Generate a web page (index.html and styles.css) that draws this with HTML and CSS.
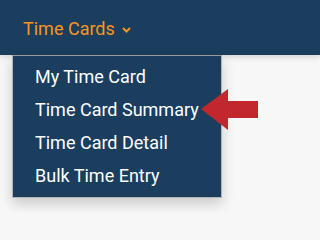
FILE: index.html
```html
<!DOCTYPE html>
<html>
<head>
<meta charset="utf-8">
<link rel="stylesheet" href="styles.css">
</head>
<body>
<header class="topbar">
  <div class="nav-item">
    <span class="nav-label">Time Cards</span>
    <svg class="chev" width="9" height="6" viewBox="0 0 9 6"><path d="M1 1 L4.5 4.5 L8 1" fill="none" stroke="#f7941d" stroke-width="2"/></svg>
  </div>
</header>
<main class="page">
  <ul class="dropdown">
    <li>My Time Card</li>
    <li>Time Card Summary</li>
    <li>Time Card Detail</li>
    <li>Bulk Time Entry</li>
  </ul>
  <svg class="pointer" width="62" height="44" viewBox="0 0 62 44"><polygon points="0,20 27,0 27,12 57,12 57,29 27,29 27,41" fill="#c1272d"/></svg>
</main>
</body>
</html>
```

FILE: styles.css
```css
html, body {
  margin: 0;
  padding: 0;
  background: #f7f7f7;
  font-family: Roboto, "Liberation Sans", sans-serif;
}
.topbar {
  height: 55px;
  background: #1b3e5f;
  display: flex;
  align-items: center;
  box-shadow: 0 2px 6px rgba(0,0,0,0.15);
  position: relative;
  z-index: 1;
}
.nav-item {
  display: flex;
  align-items: center;
  padding-left: 23px;
  padding-top: 1px;
}
.nav-label {
  color: #f7941d;
  font-size: 18px;
}
.chev {
  margin-left: 7px;
  margin-top: 3px;
}
.page {
  position: relative;
  height: 157px;
}
.dropdown {
  position: absolute;
  left: 12px;
  top: 0;
  width: 208px;
  margin: 0;
  padding: 4px 0 5px;
  list-style: none;
  background: #1b3e5f;
  border: 1px solid #b4b4b4;
  border-top-color: #9a9a9a;
  box-shadow: 0 6px 12px rgba(0,0,0,0.18);
  z-index: 2;
}
.dropdown li {
  color: #ffffff;
  font-size: 18px;
  line-height: 33px;
  padding-left: 22px;
}
.pointer {
  position: absolute;
  left: 201px;
  top: 34px;
  z-index: 3;
}
```
